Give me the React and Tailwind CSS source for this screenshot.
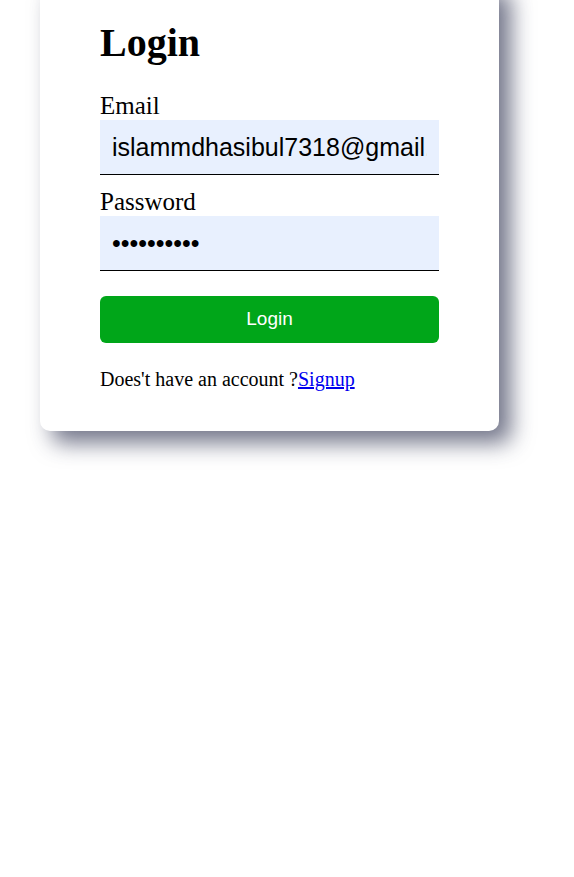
import React from 'react';

const App = () => {
  return (
    <div className="min-h-screen bg-white">
      <div className="ml-[40px] mt-[-20px] w-[459px] rounded-[10px] bg-white px-[60px] pt-[40px] pb-[40px] shadow-[12px_12px_22px_rgba(40,44,75,0.65)]">
        <h1 className="font-['Liberation_Serif',serif] text-[40px] font-bold leading-[46px] text-black">
          Login
        </h1>

        <form className="flex flex-col" onSubmit={(e) => e.preventDefault()}>
          <label className="mt-[26px] block font-['Liberation_Serif',serif] text-[25px] leading-[28px] text-black">
            Email
          </label>
          <input
            type="email"
            defaultValue="islammdhasibul7318@gmail.com"
            className="h-[55px] w-full border-b border-black bg-[#e8f0fe] px-[12px] font-['Liberation_Sans',sans-serif] text-[25px] text-black outline-none"
          />

          <label className="mt-[13px] block font-['Liberation_Serif',serif] text-[25px] leading-[28px] text-black">
            Password
          </label>
          <input
            type="password"
            defaultValue="hasibul123"
            className="h-[55px] w-full border-b border-black bg-[#e8f0fe] px-[12px] font-['Liberation_Sans',sans-serif] text-[25px] text-black outline-none"
          />

          <button
            type="submit"
            className="mt-[25px] h-[47px] w-full rounded-[6px] bg-[#00a619] font-['Liberation_Sans',sans-serif] text-[19px] text-white"
          >
            Login
          </button>
        </form>

        <p className="mt-[24px] font-['Liberation_Serif',serif] text-[20px] leading-[24px] text-black">
          Does't have an account ?
          <a href="#" className="text-[#0000ee] underline">
            Signup
          </a>
        </p>
      </div>
    </div>
  );
};

export default App;
